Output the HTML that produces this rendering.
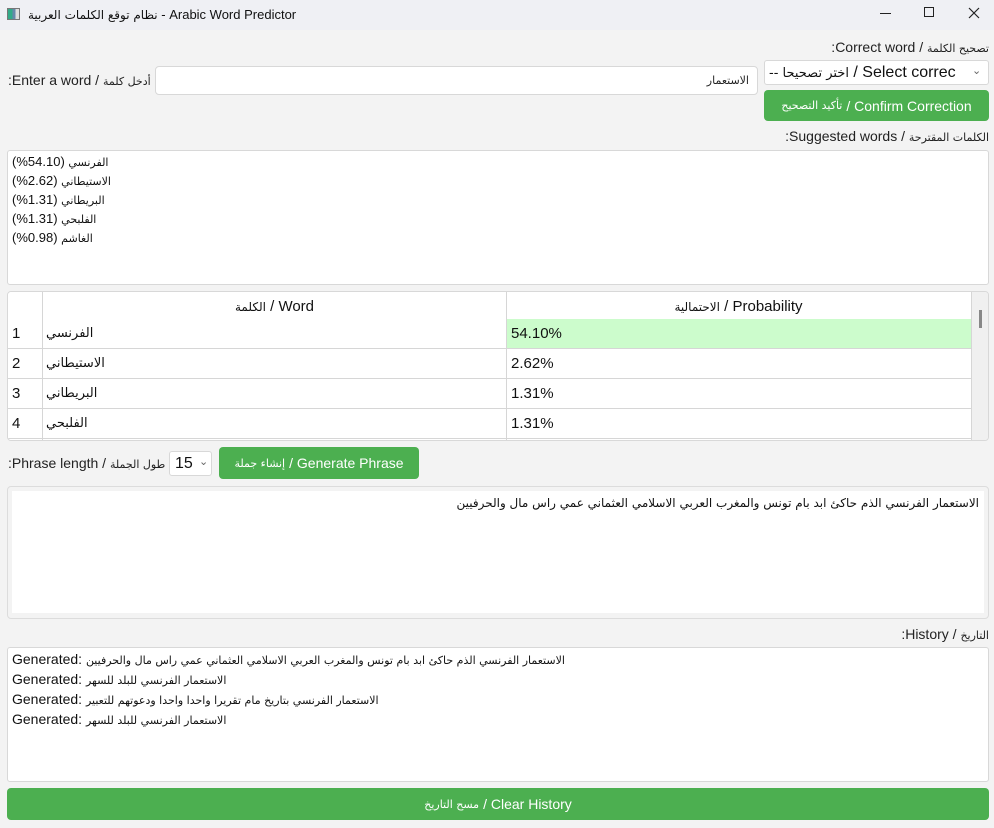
<!DOCTYPE html>
<html><head><meta charset="utf-8"><style>
*{box-sizing:border-box;margin:0;padding:0}
body{width:994px;height:828px;background:#f3f3f3;font-family:"Liberation Sans","DejaVu Sans",sans-serif;font-size:14px;color:#111;position:relative;overflow:hidden}
.a{position:absolute}
.ar{font-family:"DejaVu Sans","Noto Sans CJK SC",sans-serif;font-size:11px}
.box{background:#fff;border:1px solid #d8d8d8;border-radius:3px}
.btn{background:#4caf50;color:#fff;border-radius:4px;display:flex;align-items:center;justify-content:center;font-size:14px}
.lbl{color:#222;font-size:14px;white-space:nowrap}
.row{position:absolute;left:0;width:963px;height:30px;border-bottom:1px solid #d6d6d6}
.row div{position:absolute;top:0;height:29px;display:flex;align-items:center}
</style></head><body>
<div class="a" style="left:0;top:0;width:994px;height:30px;background:#eff0f4"></div>
<div class="a" style="left:7px;top:8px;width:13px;height:12px;border:1px solid #777;background:linear-gradient(90deg,#3a8 0 40%,#68a 40% 70%,#ddd 70%)"></div>
<div class="a" style="left:28px;top:7px;font-size:13px"><span class="ar" style="font-size:12px">نظام توقع الكلمات العربية</span> - Arabic Word Predictor</div>
<div class="a" style="left:880px;top:13px;width:11px;height:1px;background:#222"></div>
<div class="a" style="left:924px;top:7px;width:10px;height:10px;border:1px solid #222"></div>
<svg class="a" style="left:968px;top:7px" width="12" height="12"><path d="M1 1L11 11M11 1L1 11" stroke="#222" stroke-width="1.2"/></svg>

<div class="a lbl" style="right:5px;top:39px" dir="rtl"><span class="ar">تصحيح الكلمة</span> / Correct word:</div>
<div class="a lbl" style="left:8px;top:72px" dir="rtl"><span class="ar">أدخل كلمة</span> / Enter a word:</div>
<div class="a box" style="left:155px;top:66px;width:603px;height:29px;border-radius:4px"></div>
<div class="a ar" style="right:245px;top:74px;color:#222">الاستعمار</div>
<div class="a box" style="left:764px;top:60px;width:225px;height:25px;overflow:hidden;white-space:nowrap;padding:3px 0 0 4px;font-size:16px"><span class="ar" style="font-size:13px">-- اختر تصحيحا</span> / Select correc</div>
<div class="a" style="left:972px;top:64px;color:#666;font-size:11px">&#8964;</div>
<div class="a btn" style="left:764px;top:90px;width:225px;height:31px"><span class="ar" style="margin-right:4px">تأكيد التصحيح</span> / Confirm Correction</div>
<div class="a lbl" style="right:5px;top:128px" dir="rtl"><span class="ar">الكلمات المقترحة</span> / Suggested words:</div>

<div class="a box" style="left:7px;top:150px;width:982px;height:135px;padding:2px 4px;line-height:18px;font-size:13px">
<div><span class="ar">الفرنسي</span> (54.10%)</div>
<div><span class="ar">الاستيطاني</span> (2.62%)</div>
<div><span class="ar">البريطاني</span> (1.31%)</div>
<div><span class="ar">الفلبحي</span> (1.31%)</div>
<div><span class="ar">الغاشم</span> (0.98%)</div>
</div>

<div class="a box" style="left:7px;top:291px;width:982px;height:150px;overflow:hidden;border-radius:4px">
 <div class="a" style="left:0;top:0;width:963px;height:148px;background:#fff"></div>
 <div class="a" style="left:34px;top:0;width:1px;height:148px;background:#d6d6d6"></div>
 <div class="a" style="left:498px;top:0;width:1px;height:148px;background:#d6d6d6"></div>
 <div class="a" style="left:35px;top:6px;width:463px;text-align:center;font-size:15px"><span class="ar" style="font-size:12px">الكلمة</span> / Word</div>
 <div class="a" style="left:499px;top:6px;width:463px;text-align:center;font-size:15px"><span class="ar" style="font-size:12px">الاحتمالية</span> / Probability</div>
 <div class="a" style="left:499px;top:27px;width:464px;height:29px;background:#ccfccc"></div>
 <div class="row" style="top:27px;border:none;height:29px"><div style="left:4px;font-size:15px">1</div><div style="left:38px" class="ar"><span style="font-size:13px">الفرنسي</span></div><div style="left:503px;font-size:15px">54.10%</div></div>
 <div class="a" style="left:0;top:56px;width:963px;height:1px;background:#d6d6d6"></div>
 <div class="row" style="top:57px"><div style="left:4px;font-size:15px">2</div><div style="left:38px" class="ar"><span style="font-size:13px">الاستيطاني</span></div><div style="left:503px;font-size:15px">2.62%</div></div>
 <div class="row" style="top:87px"><div style="left:4px;font-size:15px">3</div><div style="left:38px" class="ar"><span style="font-size:13px">البريطاني</span></div><div style="left:503px;font-size:15px">1.31%</div></div>
 <div class="row" style="top:117px"><div style="left:4px;font-size:15px">4</div><div style="left:38px" class="ar"><span style="font-size:13px">الفلبحي</span></div><div style="left:503px;font-size:15px">1.31%</div></div>
 <div class="a" style="left:963px;top:0;width:19px;height:148px;background:#f0f0f0;border-left:1px solid #d6d6d6"></div>
 <div class="a" style="left:971px;top:18px;width:3px;height:18px;background:#888"></div>
</div>

<div class="a lbl" style="left:8px;top:455px" dir="rtl"><span class="ar">طول الجملة</span> / Phrase length:</div>
<div class="a box" style="left:169px;top:451px;width:43px;height:25px;font-size:16px;padding:3px 0 0 5px">15</div>
<div class="a" style="left:199px;top:455px;color:#666;font-size:11px">&#8964;</div>
<div class="a btn" style="left:219px;top:447px;width:200px;height:32px"><span class="ar" style="margin-right:4px">إنشاء جملة</span> / Generate Phrase</div>

<div class="a" style="left:7px;top:486px;width:982px;height:133px;border:1px solid #dcdcdc;border-radius:4px;background:#f3f3f3"></div>
<div class="a" style="left:12px;top:491px;width:972px;height:122px;background:#fff"></div>
<div class="a ar" style="right:15px;top:496px;font-size:12px;color:#111" dir="rtl">الاستعمار الفرنسي الذم حاكئ ابد بام تونس والمغرب العربي الاسلامي العثماني عمي راس مال والحرفيين</div>

<div class="a lbl" style="right:5px;top:626px" dir="rtl"><span class="ar">التاريخ</span> / History:</div>
<div class="a box" style="left:7px;top:647px;width:982px;height:135px;padding:2px 4px;line-height:18px;font-size:14px">
<div>Generated: <span class="ar" style="font-size:11px">الاستعمار الفرنسي الذم حاكئ ابد بام تونس والمغرب العربي الاسلامي العثماني عمي راس مال والحرفيين</span></div>
<div>Generated: <span class="ar" style="font-size:11px">الاستعمار الفرنسي للبلد للسهر</span></div>
<div>Generated: <span class="ar" style="font-size:11px">الاستعمار الفرنسي بتاريخ مام تقريرا واحدا واحدا ودعوتهم للتعبير</span></div>
<div>Generated: <span class="ar" style="font-size:11px">الاستعمار الفرنسي للبلد للسهر</span></div>
</div>
<div class="a btn" style="left:7px;top:788px;width:982px;height:32px"><span class="ar" style="margin-right:4px">مسح التاريخ</span> / Clear History</div>
</body></html>
